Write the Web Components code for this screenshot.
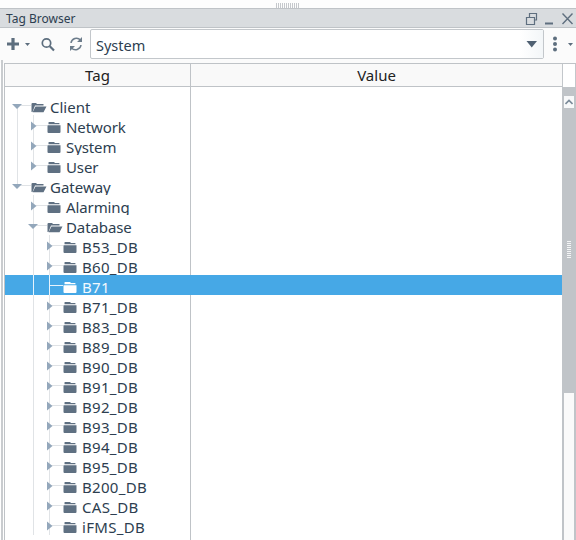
<!DOCTYPE html>
<html><head><meta charset="utf-8"><style>
html,body{margin:0;padding:0;background:#fff;overflow:hidden}
body{width:576px;height:540px;font-family:"Noto Sans",sans-serif;color:#2d3e50}
</style></head><body>
<tag-browser>
<tree-row level="0" kind="open" line="lower">Client</tree-row>
<tree-row level="1" kind="closed" guides="v">Network</tree-row>
<tree-row level="1" kind="closed" guides="v">System</tree-row>
<tree-row level="1" kind="closed" guides="v" line="upper">User</tree-row>
<tree-row level="0" kind="open" line="upper">Gateway</tree-row>
<tree-row level="1" kind="closed" guides="-">Alarming</tree-row>
<tree-row level="1" kind="open" guides="-">Database</tree-row>
<tree-row level="2" kind="closed" guides="-v">B53_DB</tree-row>
<tree-row level="2" kind="closed" guides="-v">B60_DB</tree-row>
<tree-row level="2" kind="leaf" guides="-v" selected>B71</tree-row>
<tree-row level="2" kind="closed" guides="-v">B71_DB</tree-row>
<tree-row level="2" kind="closed" guides="-v">B83_DB</tree-row>
<tree-row level="2" kind="closed" guides="-v">B89_DB</tree-row>
<tree-row level="2" kind="closed" guides="-v">B90_DB</tree-row>
<tree-row level="2" kind="closed" guides="-v">B91_DB</tree-row>
<tree-row level="2" kind="closed" guides="-v">B92_DB</tree-row>
<tree-row level="2" kind="closed" guides="-v">B93_DB</tree-row>
<tree-row level="2" kind="closed" guides="-v">B94_DB</tree-row>
<tree-row level="2" kind="closed" guides="-v">B95_DB</tree-row>
<tree-row level="2" kind="closed" guides="-v">B200_DB</tree-row>
<tree-row level="2" kind="closed" guides="-v">CAS_DB</tree-row>
<tree-row level="2" kind="closed" guides="-v">iFMS_DB</tree-row>
</tag-browser>
<script>
const OPEN='<path d="M.5 13V5Q.5 4 1.500 4H5L6 5H12.500V6.500H4L1.500 13Z M4.500 7.500H15.500L12.500 13.300H1.600Z"/>';
const SHUT='<path d="M1.500 3.500Q1.500 3 2 3H7L8 4H12Q12.500 4 12.500 4.500V5.300H1.500Z M.5 6.200H13.500V13Q13.500 14 12.500 14H1.500Q.5 14 .5 13Z"/>';
class TagBrowser extends HTMLElement{
constructor(){super();this.attachShadow({mode:'open'}).innerHTML=`<style>
:host{display:flex;flex-direction:column;width:576px;height:540px;overflow:hidden;box-sizing:border-box}
.grip{height:8px;flex:none;display:flex;justify-content:center;padding-top:3px;box-sizing:border-box;background:#fdfdfd}
.grip i{width:1px;height:5px;background:#c5c8cc;margin-right:1px}
.title{height:20px;box-sizing:border-box;flex:none;background:#d9dcdf;border-top:1px solid #bfc3c7;border-bottom:1px solid #bfc3c7;display:flex;align-items:center;font-size:12px;padding-left:6px;color:#2d3e50;padding-right:1px}
.title span{flex:1;line-height:17px}
.title svg{display:block;flex:none}
.tools{height:35px;flex:none;display:flex;align-items:flex-start;background:#fbfbfb;box-sizing:border-box;padding-top:1px}
.tools svg{display:block;flex:none}
.combo{flex:none;width:454px;height:30px;box-sizing:border-box;border:1px solid #c3c7cb;border-radius:2px;background:#fff;display:flex;align-items:center;font-size:14.500px;color:#2d3e50}
.combo span{flex:1;padding:2px 0 0 5px}
.combo div{width:23px;height:28px;background:linear-gradient(90deg,#fff,#f3f6f8);display:flex;align-items:center;justify-content:center}
.main{flex:1;min-height:0;display:flex;padding-left:1px}
.edge{width:2px;background:#c9cccf;flex:none;margin-top:-3px;margin-right:1px}
.table{flex:1;min-width:0;display:flex;flex-direction:column;border-left:1px solid #bfc3c7;border-top:1px solid #bfc3c7}
.head{height:23px;flex:none;display:flex}
.cols{flex:1;display:flex;background:#f9f9f9;border-bottom:1px solid #bfc3c7;font-size:15px;color:#222;line-height:23px;text-align:center}
.c1{width:185px;flex:none;border-right:1px solid #bfc3c7}
.c2{flex:1}
.corner{width:14px;flex:none;background:#fff;border-left:1px solid #c3c7cb;border-right:1px solid #c3c7cb;box-sizing:border-box}
.body{flex:1;min-height:0;display:flex}
.tree{flex:1;min-width:0;padding-top:8px;background:linear-gradient(#bfc3c7,#bfc3c7) 185px 0/1px 100% no-repeat}
.bar{width:14px;flex:none;display:flex;flex-direction:column;background:#c0c4c8;padding:9px 2px 0;box-sizing:border-box;align-items:stretch}
.up{height:12px;background:#f8f9fa;display:flex;align-items:center;justify-content:center;flex:none}
.thumb{height:285px;flex:none;display:flex;flex-direction:column;align-items:center;padding-top:133px;box-sizing:border-box}
.thumb i{display:block;width:4px;height:1px;background:#f4f5f6;margin-bottom:1px;flex:none}
.track{flex:1;background:#fafafa}
</style>
<div class="grip">${'<i></i>'.repeat(12)}</div>
<div class="title"><span>Tag Browser</span>
<svg width="50" height="17" viewBox="0 0 50 17" fill="none" stroke="#5f6f7f"><path d="M1.500 7.500H9.500V14.500H1.500Z M4.500 7V3.500H11.500V10H10" stroke-width="1.200"/><path d="M20 13.500H28" stroke-width="2"/><path d="M37.500 3.500L47.500 14M47.500 3.500L37.500 14" stroke-width="1.400"/></svg></div>
<div class="tools">
<svg width="90" height="30" viewBox="0 0 90 30"><path d="M13 9V21M7 15H19" stroke="#5d6e7e" stroke-width="3.200" fill="none"/><path d="M25 14H30L27.500 17Z" fill="#5d6e7e"/>
<circle cx="46.500" cy="14" r="4.200" fill="none" stroke="#5d6e7e" stroke-width="1.700"/><path d="M49.800 17.300L54 21.500" stroke="#5d6e7e" stroke-width="2.200"/>
<path d="M71 14A5.500 5.500 0 0 1 80.500 11M81 16A5.500 5.500 0 0 1 71.500 19" fill="none" stroke="#6c7c8b" stroke-width="1.500"/><path d="M82 8V13H77Z M70 22V17H75Z" fill="#6c7c8b"/></svg>
<div class="combo"><span>System</span><div><svg width="12" height="8" viewBox="0 0 12 8"><path d="M0.500 1H11L5.750 7.500Z" fill="#4f6072"/></svg></div></div>
<svg width="32" height="30" viewBox="0 0 32 30"><circle cx="11" cy="9.500" r="2" fill="#5d6e7e"/><circle cx="11" cy="15" r="2" fill="#5d6e7e"/><circle cx="11" cy="20.500" r="2" fill="#5d6e7e"/><path d="M24 14H29L26.500 17Z" fill="#5d6e7e"/></svg>
</div>
<div class="main"><div class="edge"></div><div class="table">
<div class="head"><div class="cols"><div class="c1">Tag</div><div class="c2">Value</div></div><div class="corner"></div></div>
<div class="body"><div class="tree"><slot></slot></div>
<div class="bar"><div class="up"><svg width="8" height="6" viewBox="0 0 8 6"><path d="M.5 5L4 1.500L7.500 5" fill="none" stroke="#7a8a99" stroke-width="1.600"/></svg></div>
<div class="thumb">${'<i></i>'.repeat(9)}</div><div class="track"></div></div></div>
</div></div>`;}
}
class TreeRow extends HTMLElement{
constructor(){super();this.attachShadow({mode:'open'});}
connectedCallback(){
const lvl=+this.getAttribute('level'),kind=this.getAttribute('kind'),g=this.getAttribute('guides')||'';
let cells='';
for(let i=0;i<lvl;i++)cells+=`<span class="cell ${g[i]=='v'?'v':''}"></span>`;
const line=this.getAttribute('line')||(lvl>0?'full':'none');
const tri=kind=='closed'?'<svg class="tc" width="6" height="10" viewBox="0 0 6 10"><path d="M0 .5L5.500 5L0 9.500Z" fill="#93a7bb"/></svg>':
  kind=='open'?'<svg class="to" width="10" height="5" viewBox="0 0 10 5"><path d="M0 0H10L5 5Z" fill="#93a7bb"/></svg>':'';
this.shadowRoot.innerHTML=`<style>
:host{display:block;height:20px;overflow:hidden;font-size:15px;color:#2d3e50;--g:#e0e3e6;--ic:#5f7082}
:host([level="1"]){letter-spacing:-.1px}
:host([level="2"]){letter-spacing:.3px}
:host([selected]){background:#46a8e6;color:#f2f9fe;--g:#e6f3fc;--ic:#fff}
.r{display:flex;height:20px;padding-left:4px;align-items:stretch}
.cell{width:16px;flex:none}
.cell.v{background:linear-gradient(var(--g),var(--g)) 8px 0/1px 100% no-repeat}
.tog{width:22px;flex:none;display:block;box-sizing:border-box;--h:linear-gradient(var(--g),var(--g)) 8px 10px/14px 1px no-repeat;--v:linear-gradient(var(--g),var(--g));background:var(--h)}
.tog.full{background:var(--h),var(--v) 8px 0/1px 100% no-repeat}
.tog.upper{background:var(--h),var(--v) 8px 0/1px 10px no-repeat}
.tog.lower{background:var(--h),var(--v) 8px 10px/1px 10px no-repeat}
.tc{display:block;margin:6px 0 0 6px}
.to{display:block;margin:9px 0 0 3px}
.f{width:16px;flex:none;margin:4px -1px 0 0;display:block;height:16px}
.t{padding-left:4px;line-height:24px;white-space:nowrap}
</style><div class="r">${cells}<span class="tog ${line}">${tri}</span><svg class="f" viewBox="0 0 16 16" fill="var(--ic)">${kind=='open'?OPEN:SHUT}</svg><span class="t"><slot></slot></span></div>`;
}}
customElements.define('tag-browser',TagBrowser);
customElements.define('tree-row',TreeRow);
</script></body></html>
